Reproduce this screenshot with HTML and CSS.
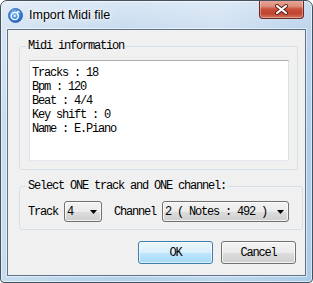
FILE: index.html
```html
<!DOCTYPE html>
<html>
<head>
<meta charset="utf-8">
<link rel="stylesheet" href="styles.css">
</head>
<body>
<div class="window">
  <div class="titlebar">
    <svg class="app-icon" width="15" height="15" viewBox="0 0 15 15">
      <defs>
        <radialGradient id="ig" cx="40%" cy="35%" r="70%">
          <stop offset="0" stop-color="#8cc2f5"/>
          <stop offset="0.6" stop-color="#3d86dc"/>
          <stop offset="1" stop-color="#1d5cb8"/>
        </radialGradient>
      </defs>
      <circle cx="7.5" cy="7.5" r="7" fill="url(#ig)" stroke="#2a5ea8" stroke-width="0.8"/>
      <circle cx="6.8" cy="8" r="3.6" fill="none" stroke="#fff" stroke-width="1.3"/>
      <circle cx="6.8" cy="8" r="1" fill="#fff"/>
      <path d="M9.5 3.2 L9.5 7.2 M9.5 3.2 L11.8 4.2" stroke="#fff" stroke-width="1.1" fill="none"/>
    </svg>
    <span class="title">Import Midi file</span>
    <div class="close">
      <svg width="15" height="11" viewBox="0 0 15 11">
        <path d="M3 2 L12 9 M12 2 L3 9" stroke="#5a2219" stroke-width="4" stroke-linecap="round"/>
        <path d="M3 2 L12 9 M12 2 L3 9" stroke="#ffffff" stroke-width="2.2" stroke-linecap="round"/>
      </svg>
    </div>
  </div>
  <div class="client">
    <fieldset class="group group-info">
      <legend>Midi information</legend>
      <div class="info-box">
        <div>Tracks : 18</div>
        <div>Bpm : 120</div>
        <div>Beat : 4/4</div>
        <div>Key shift : 0</div>
        <div>Name : E.Piano</div>
      </div>
    </fieldset>
    <fieldset class="group group-select">
      <legend>Select ONE track and ONE channel:</legend>
      <div class="select-row">
        <span class="label">Track</span>
        <div class="combo combo-track">
          <span class="combo-value">4</span>
          <svg class="arrow" width="7" height="4" viewBox="0 0 7 4"><polygon points="0,0 7,0 3.5,4" fill="#000"/></svg>
        </div>
        <span class="label label-channel">Channel</span>
        <div class="combo combo-channel">
          <span class="combo-value">2 ( Notes : 492 )</span>
          <svg class="arrow" width="7" height="4" viewBox="0 0 7 4"><polygon points="0,0 7,0 3.5,4" fill="#000"/></svg>
        </div>
      </div>
    </fieldset>
    <div class="buttons">
      <button class="btn btn-default">OK</button>
      <button class="btn">Cancel</button>
    </div>
  </div>
</div>
</body>
</html>
```

FILE: styles.css
```css
html, body {
  margin: 0;
  padding: 0;
  background: #ffffff;
}

.window {
  width: 313px;
  height: 283px;
  box-sizing: border-box;
  border: 1px solid #44525f;
  border-radius: 7px 7px 4px 4px;
  background:
    linear-gradient(90deg, rgba(255,255,255,0.25) 0%, rgba(255,255,255,0) 40%, rgba(255,255,255,0.15) 70%, rgba(120,170,220,0.15) 100%),
    linear-gradient(180deg, #d9e7f5 0%, #c8dbef 30px, #b9d3ec 120px, #b3d2ea 100%);
  box-shadow: inset 0 0 0 1px rgba(255,255,255,0.55);
  display: flex;
  flex-direction: column;
  overflow: hidden;
}

.titlebar {
  height: 28px;
  display: flex;
  align-items: center;
  padding-left: 7px;
  flex-shrink: 0;
}

.app-icon {
  display: block;
  flex-shrink: 0;
}

.title {
  margin-left: 6px;
  font-family: "Liberation Sans", Arial, sans-serif;
  font-size: 12.5px;
  color: #000;
  text-shadow: 0 0 6px rgba(255,255,255,0.9), 0 0 3px rgba(255,255,255,0.9);
}

.close {
  margin-left: auto;
  margin-right: 8px;
  margin-top: -1px;
  align-self: flex-start;
  width: 43px;
  height: 18px;
  border: 1px solid #6b2a20;
  border-top: none;
  border-radius: 0 0 4px 4px;
  background: linear-gradient(180deg, #e9a999 0%, #dc8d7c 35%, #c9503c 50%, #c04430 75%, #d0745c 100%);
  box-shadow: inset 0 0 0 1px rgba(255,255,255,0.35);
  display: flex;
  align-items: center;
  justify-content: center;
}

.close svg {
  display: block;
}

.client {
  margin: 0 6px 0 6px;
  height: 247px;
  box-sizing: border-box;
  border: 1px solid #5f7288;
  box-shadow: 0 0 0 1px rgba(255,255,255,0.5);
  background: #f0f0f0;
  display: flex;
  flex-direction: column;
  font-family: "Liberation Mono", "Courier New", monospace;
  font-size: 12px;
  line-height: 14px;
  letter-spacing: -1.2px;
  color: #000;
}

.group {
  margin: 9px 0 0 11px;
  border: 1px solid #d5dfe5;
  border-radius: 3px;
  min-width: 0;
}

.group legend {
  padding: 0 2px;
  font-size: 12px;
  line-height: 14px;
}

.group-info {
  margin-right: 7px;
  padding: 7px 8px 8px 9px;
}

.group-info legend {
  margin-left: -3px;
}

.group-select {
  margin-right: 2px;
  padding: 8px 8px 7px 8px;
}

.group-select legend {
  margin-left: -2px;
}

.info-box {
  height: 101px;
  box-sizing: border-box;
  background: #ffffff;
  border: 1px solid;
  border-color: #abadb3 #dbdfe6 #e3e9ef #e2e3ea;
  padding: 5px 2px;
}

.select-row {
  display: flex;
  align-items: center;
}

.label-channel {
  margin-left: 12px;
}

.combo {
  margin-left: 6px;
  height: 21px;
  box-sizing: border-box;
  border: 1px solid #707070;
  border-radius: 3px;
  background: linear-gradient(180deg, #f2f2f2 0%, #ebebeb 50%, #dddddd 51%, #cfcfcf 100%);
  box-shadow: inset 0 0 0 1px rgba(255,255,255,0.7);
  display: flex;
  align-items: center;
  padding: 0 3px 0 2px;
}

.combo-track {
  width: 38px;
}

.combo-channel {
  width: 127px;
}

.combo-value {
  flex: 1;
  white-space: pre;
}

.arrow {
  display: block;
  flex-shrink: 0;
  margin-right: 1px;
}

.buttons {
  display: flex;
  justify-content: flex-end;
  gap: 8px;
  margin: 11px 9px 0 0;
}

.btn {
  width: 75px;
  height: 23px;
  box-sizing: border-box;
  margin: 0;
  padding: 0;
  border: 1px solid #707070;
  border-radius: 3px;
  background: linear-gradient(180deg, #f2f2f2 0%, #ebebeb 50%, #dddddd 51%, #cfcfcf 100%);
  box-shadow: inset 0 0 0 1px rgba(255,255,255,0.75);
  font-family: "Liberation Mono", "Courier New", monospace;
  font-size: 12px;
  letter-spacing: -1.2px;
  color: #000;
}

.btn-default {
  border-color: #3c7fb1;
  background: linear-gradient(180deg, #eaf6fd 0%, #d9f0fc 50%, #bee6fd 51%, #a7d9f5 100%);
  box-shadow: inset 0 0 0 1px rgba(255,255,255,0.6);
}
```
